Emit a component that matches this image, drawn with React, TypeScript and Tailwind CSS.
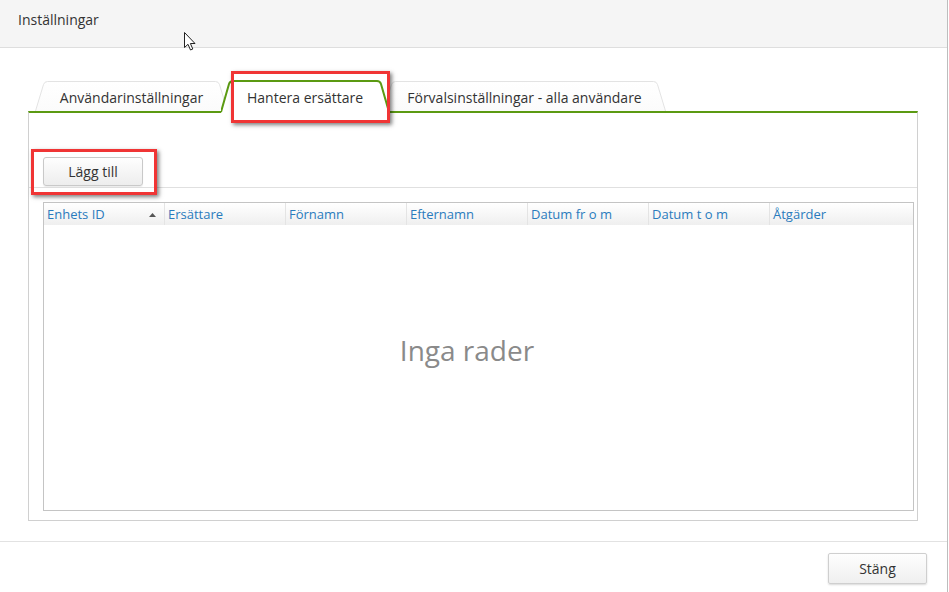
import React from 'react';

const font = { fontFamily: '"Open Sans", "Noto Sans", sans-serif' };

const columns = ['Enhets ID', 'Ersättare', 'Förnamn', 'Efternamn', 'Datum fr o m', 'Datum t o m', 'Åtgärder'];

const Tab: React.FC<{ label: string; width: number; active?: boolean; className?: string; children?: React.ReactNode }> = ({
  label,
  width,
  active,
  className = '',
  children,
}) => {
  const w = width;
  if (active) {
    return (
      <div className={`relative z-10 h-[33px] shrink-0 self-start ${className}`} style={{ width: w }}>
        <svg className="absolute inset-0" width={w} height={33}>
          <path d={`M0,33 L8,4 Q9,1 12,1 L${w - 12},1 Q${w - 9},1 ${w - 8},4 L${w},33 Z`} fill="#ffffff" />
          <path
            d={`M0,32 L8,4 Q9,1 12,1 L${w - 12},1 Q${w - 9},1 ${w - 8},4 L${w},32`}
            fill="none"
            stroke="#5b9a12"
            strokeWidth={2}
          />
        </svg>
        <div className="relative pt-[8px] text-center text-[14px] leading-[20px] text-[#333]">{label}</div>
        {children}
      </div>
    );
  }
  return (
    <div className={`relative h-[31px] shrink-0 ${className}`} style={{ width: w }}>
      <svg className="absolute inset-0" width={w} height={31}>
        <defs>
          <linearGradient id={`tg${w}`} x1="0" y1="0" x2="0" y2="1">
            <stop offset="0" stopColor="#ffffff" />
            <stop offset="1" stopColor="#fbfbfb" />
          </linearGradient>
        </defs>
        <path
          d={`M0.5,31 L8.5,4.5 Q9.5,1.5 12.5,1.5 L${w - 12.5},1.5 Q${w - 9.5},1.5 ${w - 8.5},4.5 L${w - 0.5},31`}
          fill={`url(#tg${w})`}
          stroke="#e3e3e3"
          strokeWidth={1}
        />
      </svg>
      <div className="relative pt-[8px] text-center text-[14px] leading-[20px] text-[#333]">{label}</div>
    </div>
  );
};

const RedBox: React.FC<{ className: string }> = ({ className }) => (
  <div
    className={`pointer-events-none absolute border-[3px] border-[#f03535] shadow-[2px_2px_4px_rgba(0,0,0,0.5)] ${className}`}
  />
);

export default function App() {
  return (
    <div className="relative h-[592px] w-[949px] overflow-hidden bg-white" style={font}>
      <div className="flex h-[592px] w-[948px] flex-col border-r border-[#bdbdbd]">
        {/* header */}
        <div className="h-[48px] border-b border-[#dedede] bg-[#f5f5f5] pl-[18px] pt-[10px] text-[14px] leading-[20px] text-[#333]">
          Inställningar
        </div>

        {/* tabs */}
        <div className="mx-[28px] mt-[32px] flex h-[31px] w-[890px] pl-[7px]">
          <Tab label="Användarinställningar" width={193} />
          <Tab label="Hantera ersättare" width={168} active className="-ml-[7px]">
            <RedBox className="left-[10px] -top-[9px] h-[52px] w-[159px]" />
          </Tab>
          <Tab label="Förvalsinställningar - alla användare" width={283} className="-ml-[6px]" />
        </div>

        {/* panel */}
        <div className="mx-[28px] flex h-[410px] w-[890px] flex-col border-x border-b border-t-2 border-x-[#d0d0d0] border-b-[#d0d0d0] border-t-[#5b9a12]">
          <div className="border-b border-[#e0e0e0] pb-[1px] pl-[14px] pt-[44px]">
            <div className="relative w-[100px]">
              <button className="h-[29px] w-[100px] rounded-[3px] border border-[#c9c9c9] bg-gradient-to-b from-[#fefefe] to-[#ededed] text-[14px] text-[#333] shadow-[0_1px_1px_rgba(0,0,0,0.08)]">
                Lägg till
              </button>
              <RedBox className="-left-[12px] -top-[8px] h-[46px] w-[126px]" />
            </div>
          </div>

          <div className="ml-[14px] mr-[3px] mt-[14px] flex h-[309px] flex-col border border-[#c4c4c4]">
            <div className="flex h-[22px] bg-gradient-to-b from-[#ffffff] to-[#efefef] text-[13px] leading-[22px] text-[#2a7bbd]">
              {columns.map((c, i) => (
                <div
                  key={c}
                  className={`relative flex items-center pl-[3px] ${
                    i === columns.length - 1 ? 'flex-1' : 'w-[121px] border-r border-[#e4e4e4]'
                  }`}
                >
                  {c}
                  {i === 0 && (
                    <svg className="absolute right-[8px] top-[10px]" width="7" height="4">
                      <path d="M0,4 L3.5,0 L7,4 Z" fill="#555" />
                    </svg>
                  )}
                </div>
              ))}
            </div>
            <div className="flex-1 pr-[23px] pt-[106px] text-center text-[28px] leading-[38px] text-[#8a8a8a]">Inga rader</div>
          </div>
        </div>

        {/* footer */}
        <div className="mt-[20px] flex flex-1 justify-end border-t border-[#e2e2e2] pr-[20px] pt-[11px]">
          <button className="h-[31px] w-[99px] rounded-[2px] border border-[#cfcfcf] bg-gradient-to-b from-[#fefefe] to-[#efefef] text-[14px] text-[#333] shadow-[0_1px_2px_rgba(0,0,0,0.15)]">
            Stäng
          </button>
        </div>
      </div>

      {/* mouse pointer */}
      <svg className="pointer-events-none absolute left-[184px] top-[32px]" width="13" height="20" viewBox="0 0 13 20">
        <path d="M0.5,0.5 L0.5,15.5 L4,12.3 L6.5,18 L8.8,17 L6.4,11.5 L11,11.5 Z" fill="#fff" stroke="#222" strokeWidth={1} />
      </svg>
    </div>
  );
}
